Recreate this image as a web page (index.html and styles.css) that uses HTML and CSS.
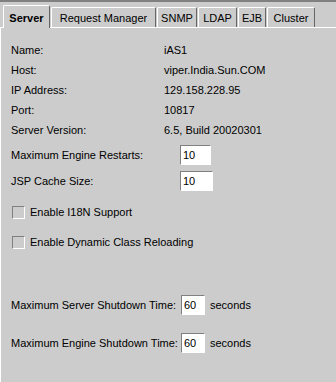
FILE: index.html
```html
<!DOCTYPE html>
<html lang="en">
<head>
  <meta charset="UTF-8" />
  <title>Server Properties</title>
  <link rel="stylesheet" href="styles.css">
</head>
<body>
  <div class="topline"></div>

  <div class="tabs">
    <div class="tab active">Server</div>
    <div class="tab tab-rm">Request Manager</div>
    <div class="tab tab-snmp">SNMP</div>
    <div class="tab tab-ldap">LDAP</div>
    <div class="tab tab-ejb">EJB</div>
    <div class="tab tab-cluster">Cluster</div>
  </div>

  <div class="panel">
    <div class="info">
      <span>Name:</span><span>iAS1</span>
      <span>Host:</span><span>viper.India.Sun.COM</span>
      <span>IP Address:</span><span>129.158.228.95</span>
      <span>Port:</span><span>10817</span>
      <span>Server Version:</span><span>6.5, Build 20020301</span>
    </div>

    <div class="field">
      <label>Maximum Engine Restarts:</label>
      <input type="text" value="10" class="short" />
    </div>
    <div class="field">
      <label>JSP Cache Size:</label>
      <input type="text" value="10" />
    </div>

    <label class="check"><span class="box"></span>Enable I18N Support</label>
    <label class="check"><span class="box"></span>Enable Dynamic Class Reloading</label>

    <div class="field timeout first">
      <label>Maximum Server Shutdown Time:</label>
      <input type="text" value="60" />
      <span>seconds</span>
    </div>
    <div class="field timeout">
      <label>Maximum Engine Shutdown Time:</label>
      <input type="text" value="60" />
      <span>seconds</span>
    </div>
  </div>
</body>
</html>
```

FILE: styles.css
```css
body {
  margin: 0;
  background: #cccccc;
  font-family: "Liberation Sans", Arial, sans-serif;
  font-size: 11px;
  color: #000;
  width: 336px;
  height: 382px;
  overflow: hidden;
  white-space: nowrap;
}
.topline {
  height: 2px;
  background: #808080;
}
.tabs {
  display: flex;
  align-items: flex-end;
  height: 25px;
  padding-left: 3px;
  border-bottom: 1px solid #ffffff;
}
.tab {
  box-sizing: border-box;
  height: 20px;
  padding-top: 2px;
  line-height: 17px;
  text-align: center;
  border-top: 1px solid #ffffff;
  border-left: 1px solid #ffffff;
  border-right: 1px solid #666666;
  border-radius: 2px 2px 0 0;
  margin-right: 1px;
}
.tab.active {
  width: 47px;
  font-weight: bold;
  height: 23px;
  line-height: 21px;
  margin-bottom: -1px;
  background: #cccccc;
}
.tab-rm { width: 105px; }
.tab-snmp { width: 40px; }
.tab-ldap { width: 39px; }
.tab-ejb { width: 28px; }
.tab-cluster { width: 48px; }
.panel {
  height: 354px;
  border-left: 1px solid #ffffff;
  padding: 16px 0 0 10px;
}
.info {
  display: grid;
  grid-template-columns: 153px auto;
  row-gap: 7px;
  line-height: 13px;
}
.field {
  display: flex;
  align-items: center;
  margin-top: 6px;
}
.info + .field {
  margin-top: 8px;
}
.field label {
  width: 169px;
  flex-shrink: 0;
}
.field input {
  width: 27px;
  height: 16px;
  padding: 1px 2px;
  border: 1px solid;
  border-color: #808080 #ffffff #ffffff #808080;
  background: #fff;
  font: inherit;
}
.field input.short {
  width: 25px;
}
.check {
  display: flex;
  align-items: center;
  margin-top: 14px;
  line-height: 14px;
}
.check + .check {
  margin-top: 16px;
}
.box {
  width: 11px;
  height: 11px;
  margin: 0 5px 0 1px;
  border: 1px solid;
  border-color: #808080 #ffffff #ffffff #808080;
}
.timeout label {
  width: 170px;
}
.timeout input {
  width: 18px;
}
.timeout span {
  margin-left: 5px;
}
.timeout.first {
  margin-top: 46px;
}
.timeout + .timeout {
  margin-top: 18px;
}
```
